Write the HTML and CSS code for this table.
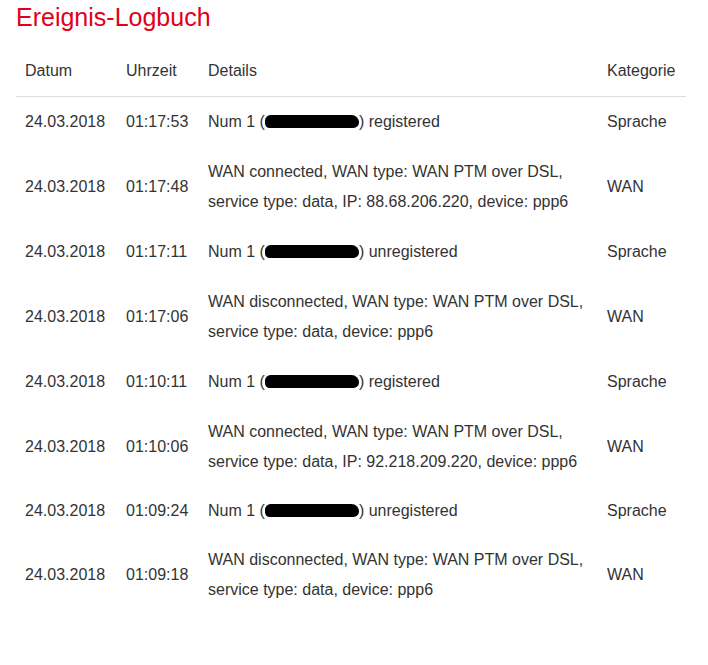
FILE: index.html
```html
<!DOCTYPE html>
<html lang="de">
<head>
    <meta charset="UTF-8">
    <meta name="viewport" content="width=device-width, initial-scale=1.0">
    <title>Ereignis-Logbuch</title>
    <link rel="stylesheet" href="styles.css">
</head>
<body>
    <div class="container">
        <h1>Ereignis-Logbuch</h1>

        <table class="log-table">
            <colgroup>
                <col class="col-date">
                <col class="col-time">
                <col class="col-details">
                <col class="col-category">
            </colgroup>
            <thead>
                <tr>
                    <th>Datum</th>
                    <th>Uhrzeit</th>
                    <th>Details</th>
                    <th>Kategorie</th>
                </tr>
            </thead>
            <tbody>
                <tr>
                    <td>24.03.2018</td>
                    <td>01:17:53</td>
                    <td>Num 1 (<span class="redacted"></span>) registered</td>
                    <td>Sprache</td>
                </tr>
                <tr>
                    <td>24.03.2018</td>
                    <td>01:17:48</td>
                    <td>WAN connected, WAN type: WAN PTM over DSL, service type: data, IP: 88.68.206.220, device: ppp6</td>
                    <td>WAN</td>
                </tr>
                <tr>
                    <td>24.03.2018</td>
                    <td>01:17:11</td>
                    <td>Num 1 (<span class="redacted"></span>) unregistered</td>
                    <td>Sprache</td>
                </tr>
                <tr>
                    <td>24.03.2018</td>
                    <td>01:17:06</td>
                    <td>WAN disconnected, WAN type: WAN PTM over DSL, service type: data, device: ppp6</td>
                    <td>WAN</td>
                </tr>
                <tr>
                    <td>24.03.2018</td>
                    <td>01:10:11</td>
                    <td>Num 1 (<span class="redacted"></span>) registered</td>
                    <td>Sprache</td>
                </tr>
                <tr>
                    <td>24.03.2018</td>
                    <td>01:10:06</td>
                    <td>WAN connected, WAN type: WAN PTM over DSL, service type: data, IP: 92.218.209.220, device: ppp6</td>
                    <td>WAN</td>
                </tr>
                <tr class="tight">
                    <td>24.03.2018</td>
                    <td>01:09:24</td>
                    <td>Num 1 (<span class="redacted"></span>) unregistered</td>
                    <td>Sprache</td>
                </tr>
                <tr>
                    <td>24.03.2018</td>
                    <td>01:09:18</td>
                    <td>WAN disconnected, WAN type: WAN PTM over DSL, service type: data, device: ppp6</td>
                    <td>WAN</td>
                </tr>
            </tbody>
        </table>
    </div>
</body>
</html>
```

FILE: styles.css
```css
* {
    margin: 0;
    padding: 0;
    box-sizing: border-box;
}

body {
    font-family: "Liberation Sans", Arial, sans-serif;
    background: #fff;
    color: #333;
    font-size: 16px;
}

.container {
    padding: 2px 22px 0 16px;
}

h1 {
    color: #e2001a;
    font-weight: normal;
    font-size: 25px;
    line-height: 30px;
    margin-bottom: 14px;
}

.log-table {
    width: 670px;
    border-collapse: collapse;
    table-layout: fixed;
}

.col-date { width: 101px; }
.col-time { width: 82px; }
.col-details { width: 399px; }
.col-category { width: 88px; }

.log-table th,
.log-table td {
    text-align: left;
    font-weight: normal;
    line-height: 30px;
    padding: 10px 9px;
    vertical-align: middle;
}

.log-table thead th {
    border-bottom: 1px solid #ddd;
}

.log-table tr.tight td {
    padding: 9px 9px;
}

.redacted {
    display: inline-block;
    width: 94px;
    height: 13px;
    background: #000;
    border-radius: 6px 8px 6px 5px;
    vertical-align: -1px;
}
```
